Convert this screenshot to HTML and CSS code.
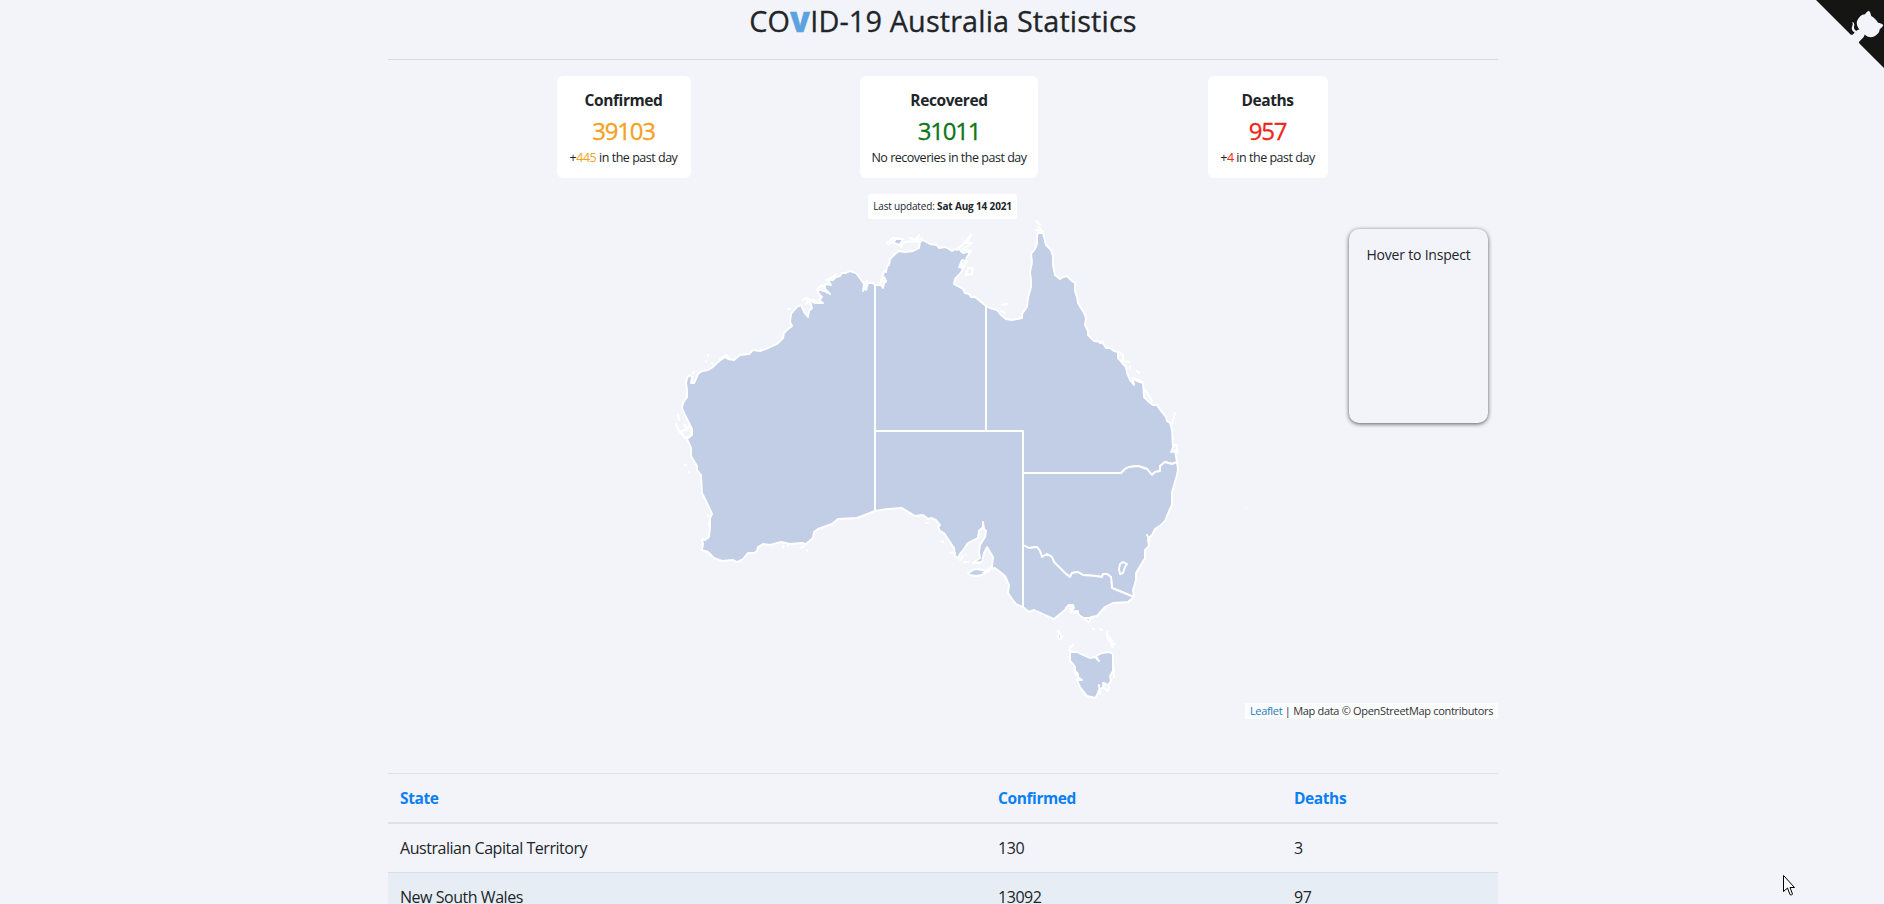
FILE: index.html
```html
<!DOCTYPE html>
<html lang="en">
<head>
<meta charset="utf-8">
<title>COVID-19 Australia Statistics</title>
<link rel="stylesheet" href="styles.css">
</head>
<body>
<a class="corner" aria-label="GitHub">
  <svg width="80" height="80" viewBox="0 0 250 250">
    <path class="corner-bg" d="M0,0 L115,115 L130,115 L142,142 L250,250 L250,0 Z"/>
    <path class="cat" d="M128.3,109.0 C113.8,99.7 119.0,89.6 119.0,89.6 C122.0,82.7 120.5,78.6 120.5,78.6 C119.2,72.0 123.4,76.3 123.4,76.3 C127.3,80.9 125.5,87.3 125.5,87.3 C122.9,97.6 130.6,101.9 134.4,103.2"/>
    <path class="cat" d="M115.0,115.0 C114.9,115.1 118.7,116.5 119.8,115.4 L133.7,101.6 C136.9,99.2 139.9,98.4 142.2,98.6 C133.8,88.0 127.5,74.4 143.8,58.0 C148.5,53.4 154.0,51.2 159.7,51.0 C160.3,49.4 163.2,43.6 171.4,40.1 C171.4,40.1 176.1,42.5 178.8,56.2 C183.1,58.6 187.2,61.8 190.9,65.4 C194.5,69.0 197.7,73.2 200.1,77.6 C213.8,80.2 216.3,84.9 216.3,84.9 C212.7,93.1 206.9,96.0 205.4,96.6 C205.1,102.4 203.0,107.8 198.3,112.5 C181.9,128.9 168.3,122.5 157.7,114.1 C157.9,116.9 156.7,120.9 152.7,124.9 L141.0,136.5 C139.8,137.7 141.6,141.9 141.8,141.8 Z"/>
  </svg>
</a>
<main class="container">
  <h1 class="title">CO<b>V</b>ID-19 Australia Statistics</h1>
  <section class="cards">
    <div class="card confirmed">
      <div class="label">Confirmed</div>
      <div class="number">39103</div>
      <div class="delta">+<em>445</em> in the past day</div>
    </div>
    <div class="card recovered">
      <div class="label">Recovered</div>
      <div class="number">31011</div>
      <div class="delta">No recoveries in the past day</div>
    </div>
    <div class="card deaths">
      <div class="label">Deaths</div>
      <div class="number">957</div>
      <div class="delta">+<em>4</em> in the past day</div>
    </div>
  </section>
  <div class="updated">Last updated: <b>Sat Aug 14 2021</b></div>
  <section class="map">
    <svg class="australia" viewBox="388 219 1110 500" width="1110" height="500">
      <g class="land">
        <!-- Western Australia -->
        <path d="M875,285 873,283 868,283 866,290 865,286 863,291 864,284 859,277 856,273 850,271 846,273 842,273 840,276 836,277 833,280 828,280 831,285 826,284 824,288 830,294 824,291 817,289 819,294 822,297 819,300 823,303 817,303 814,300 807,300 811,304 812,308 809,311 808,317 804,312 801,305 797,307 795,309 791,314 790,322 792,326 787,330 784,333 783,338 777,344 768,348 760,351 753,350 749,354 740,355 734,360 728,359 725,357 718,362 713,367 708,370 702,371 698,374 696,379 694,383 691,383 692,377 690,375 687,378 686,383 687,390 687,397 683,403 682,408 685,415 689,423 692,429 692,435 687,439 691,448 691,456 697,466 697,470 701,475 702,493 707,503 712,514 710,518 710,527 709,537 705,540 702,539 703,544 702,550 708,552 714,558 722,561 733,560 737,562 743,559 748,553 754,553 757,551 758,547 763,544 770,545 781,542 790,544 802,543 806,544 813,538 814,532 818,529 832,524 838,519 857,518 875,511Z"/>
        <!-- Northern Territory -->
        <path d="M875,431 875,285 881,285 883,288 884,283 886,282 881,280 883,275 884,271 886,272 887,266 889,265 890,259 895,254 899,251 905,252 913,251 919,248 920,242 923,240 930,244 937,245 939,248 945,247 949,249 952,251 958,248 961,251 963,253 967,252 971,251 967,257 965,262 960,265 963,267 962,271 958,276 955,279 954,284 963,289 965,293 969,294 971,297 975,297 986,306 986,431Z"/>
        <!-- South Australia -->
        <path d="M875,431H1023V607L1016,604 1012,599 1008,593 1009,585 1005,576 995,568 991,569 987,570 992,567 993,557 990,552 987,547 984,553 982,562 973,563 977,560 980,558 979,552 980,545 985,537 986,531 984,529 983,522 983,527 979,531 978,538 968,543 964,549 960,554 958,558 955,556 954,548 950,542 944,533 940,531 938,527 940,525 936,520 932,518 928,519 923,515 915,516 902,508 888,509 875,511Z"/>
        <!-- Queensland -->
        <path d="M986,431V306L990,308 997,310 1001,315 1006,319 1012,320 1022,318 1022,314 1027,307 1028,298 1031,287 1031,280 1030,272 1032,262 1031,254 1035,249 1037,244 1037,236 1038,233 1043,233 1044,237 1046,245 1051,250 1053,256 1053,265 1055,275 1060,279 1063,277 1067,276 1072,281 1075,283 1075,291 1077,297 1078,303 1084,313 1086,318 1085,325 1088,331 1088,335 1094,341 1102,342 1106,348 1110,348 1114,351 1118,352 1118,358 1123,364 1126,367 1127,373 1130,380 1134,385 1133,379 1137,381 1143,383 1144,397 1149,402 1153,405 1157,405 1161,411 1166,417 1167,421 1170,423 1172,430 1173,447 1171,452 1175,451 1177,462 1172,464 1165,462 1160,466 1160,471 1155,472 1152,475 1147,469 1138,466 1129,467 1125,469 1121,473H1023V431Z"/>
        <!-- New South Wales -->
        <path d="M1023,473H1121L1125,469 1129,467 1138,466 1147,469 1152,475 1155,472 1160,471 1160,466 1165,462 1172,464 1177,462 1178,469 1177,475 1172,492 1172,505 1169,511 1165,521 1161,525 1155,529 1152,535 1148,539 1149,546 1145,550 1145,558 1142,563 1136,573 1136,580 1133,590 1134,597 1112,588 1111,577 1107,574 1103,574 1102,577 1096,576 1083,575 1078,572 1072,573 1070,577 1065,573 1054,562 1052,557 1047,554 1042,557 1040,551 1037,547 1029,548 1023,545Z"/>
        <!-- Victoria -->
        <path d="M1023,545 1029,548 1037,547 1040,551 1042,557 1047,554 1052,557 1054,562 1065,573 1070,577 1072,573 1078,572 1083,575 1096,576 1102,577 1103,574 1107,574 1111,577 1112,588 1134,597 1128,602 1113,603 1105,607 1097,616 1091,617 1089,622 1085,619 1079,615 1077,611 1070,612 1074,608 1073,605 1069,605 1065,610 1060,614 1054,619 1034,610 1029,612 1023,607Z"/>
        <!-- Australian Capital Territory -->
        <path d="M1123,562 1127,564 1125,567 1123,573 1120,574 1119,569 1120,564Z"/>
        <!-- Tasmania -->
        <path d="M1070,652 1077,652 1083,655 1090,658 1095,657 1099,661 1096,656 1102,653 1109,652 1113,654 1113,671 1110,676 1111,681 1108,685 1104,683 1103,687 1099,690 1097,695 1095,698 1087,696 1083,691 1080,687 1077,680 1082,680 1078,677 1075,672 1075,667 1073,664 1070,661Z"/>
        <!-- Kangaroo, Tiwi, King and Flinders islands -->
        <path d="M968,573 975,569 983,570 987,572 982,575 976,576 970,575Z"/>
        <path d="M893,242 896,239 903,239 900,245 897,244Z M1059,632 1061,635 1061,639 1058,638Z M1107,634 1112,640 1112,642 1108,638Z"/>
      </g>
      <!-- coastal islands, reefs and inlets -->
      <path class="isles" d="M957,250 962,245 971,235 969,239 966,243 972,243 963,249 970,251M960,265 962,260 967,262 963,268 959,267M966,274 968,268 973,268 972,274 966,275M887,243 893,238 898,238M889,244 894,241M910,238 915,240 919,235 917,242 922,238M901,247 905,242 916,241M1036,221 1038,223 1040,225M1036,230 1043,231M1038,227 1041,229M1002,305 1007,304M1001,311 1005,313M1100,343 1103,342M1120,352 1123,356 1123,361 1129,362M1130,367 1130,368M1137,371 1139,373M1133,378 1138,380 1142,382M1145,390 1148,394 1152,401M1175,413 1172,424M1174,445 1177,445 1177,453M678,415 679,420M676,424 679,431 685,438 690,436 692,431 689,426 686,430 681,431 683,435M684,424 686,427M685,465 686,465M689,472 689,472M708,515 708,516M709,523 709,526M708,355 708,356M706,361 706,362M712,363 713,364M693,373 694,372M720,359 726,355 728,357M788,309 790,309M803,300 806,298 809,299 806,304 811,301 815,303M817,290 822,285 825,288M826,280 833,277 836,274M926,523 928,523M942,541 943,542M950,553 955,553M960,560 963,556M964,562 968,562M966,555 966,555M974,563 980,563M983,573 989,571M783,546V548M788,545V546M801,548 804,546M807,550V551M1066,608 1069,605 1073,607 1070,609M1074,613 1078,611M1085,618 1092,618M1089,622 1091,619M1058,631 1062,637M1093,629H1094M1100,629 1102,630M1107,632 1107,637 1112,645 1115,644M1111,646 1113,647M1070,651 1070,647 1073,645M1074,670 1078,674 1078,679M1082,690 1085,694M1099,685 1100,694M1103,683 1104,688 1108,691 1109,687M1114,669V677M880,283 884,277 886,281M1147,535 1150,541M864,289 867,281"/>
      <path class="islet" d="M1246,508H1247"/>
    </svg>
    <div class="info">Hover to Inspect</div>
    <div class="attribution"><a>Leaflet</a> | Map data © OpenStreetMap contributors</div>
  </section>
  <table class="states">
    <thead><tr><th class="c1">State</th><th class="c2">Confirmed</th><th>Deaths</th></tr></thead>
    <tbody>
      <tr><td>Australian Capital Territory</td><td>130</td><td>3</td></tr>
      <tr class="odd"><td>New South Wales</td><td>13092</td><td>97</td></tr>
    </tbody>
  </table>
</main>
<svg class="cursor" width="12" height="22" viewBox="0 0 12 22"><path d="M.5,.5V16.5L4.5,13 7,19.5Q8.5,21 9.5,19L7,12.5H11.5Z"/></svg>
</body>
</html>
```
FILE: styles.css
```css
* { box-sizing: border-box; }
html, body { height: 904px; overflow: hidden; }
body {
  margin: 0;
  background: #f2f4fa;
  color: #212529;
  font-family: "Open Sans", "Noto Sans", sans-serif;
  font-size: 16px;
  line-height: 24px;
}
.container { width: 1110px; margin-left: 388px; }
.title {
  margin: 0;
  height: 60px;
  padding-top: 4px;
  border-bottom: 1px solid #d9dbe1;
  font-size: 28.8px;
  font-weight: 500;
  letter-spacing: .15px;
  line-height: 34px;
  text-align: center;
  -webkit-text-stroke: .3px;
}
.title b { color: #5aa2e0; font-weight: 800; }
.cards { display: flex; justify-content: space-evenly; margin: 16px 1px 0 -1px; }
.card {
  height: 102px;
  padding-top: 12px;
  background: #fff;
  border-radius: 6px;
  text-align: center;
  white-space: nowrap;
}
.card em { font-style: normal; }
.confirmed { width: 134px; }
.recovered { width: 178px; }
.deaths { width: 120px; }
.label { margin-bottom: 4px; font-weight: 700; font-size: 15.5px; letter-spacing: -.4px; }
.number {
  margin-bottom: 3px;
  font-size: 24px;
  font-weight: 500;
  letter-spacing: -1.2px;
  line-height: 29px;
  -webkit-text-stroke: .3px;
}
.delta { font-size: 12.5px; letter-spacing: -.48px; line-height: 20px; }
.confirmed .number, .confirmed em { color: #f5a11c; }
.recovered .number { color: #0c7516; }
.deaths .number, .deaths em { color: #ee2515; }
.updated {
  width: 149px;
  height: 25px;
  margin: 16px 0 0 480px;
  background: #fff;
  border-radius: 3px;
  font-size: 10px;
  letter-spacing: -.16px;
  text-align: center;
  white-space: nowrap;
}
.map { position: relative; height: 500px; }
.australia { display: block; }
.land path { fill: #c2cee6; stroke: #fff; stroke-width: 1.9; stroke-linejoin: round; }
.isles, .islet { fill: none; stroke: #fff; stroke-width: 2; stroke-linecap: round; stroke-linejoin: round; }
.islet { stroke-width: 1.2; }
.info {
  position: absolute;
  top: 10px;
  right: 10px;
  width: 139px;
  height: 194px;
  padding-top: 14px;
  border-radius: 10px;
  background: #f2f4fa;
  box-shadow: 0 1px 4px rgba(0, 0, 0, .65);
  font-size: 14px;
  letter-spacing: -.2px;
  text-align: center;
  white-space: nowrap;
}
.attribution {
  position: absolute;
  right: 0;
  bottom: 0;
  width: 253px;
  height: 16px;
  background: rgba(255, 255, 255, .7);
  color: #333;
  font-size: 11px;
  letter-spacing: -.31px;
  line-height: 16px;
  text-align: center;
  white-space: nowrap;
}
.attribution a { color: #1c7dc0; }
.states {
  width: 100%;
  margin-top: 54px;
  border-collapse: separate;
  border-spacing: 0;
  table-layout: fixed;
  text-align: left;
}
.states th, .states td { padding: 12px; }
.states td { letter-spacing: -.46px; }
.states th {
  border-top: 1px solid #dee2e6;
  border-bottom: 2px solid #dee2e6;
  color: #0c7ff5;
  font-size: 15.5px;
  font-weight: 700;
  letter-spacing: -.4px;
}
.c1 { width: 598px; }
.c2 { width: 296px; }
.odd td { border-top: 1px solid #dadee3; background: #e7edf4; }
.corner { position: absolute; top: -2px; right: -10px; width: 80px; height: 80px; }
.corner-bg { fill: #151513; }
.cat { fill: #f2f4fa; }
.cursor { position: absolute; left: 1783px; top: 875px; }
.cursor path { fill: #fff; stroke: #000; stroke-width: 1; }
```
